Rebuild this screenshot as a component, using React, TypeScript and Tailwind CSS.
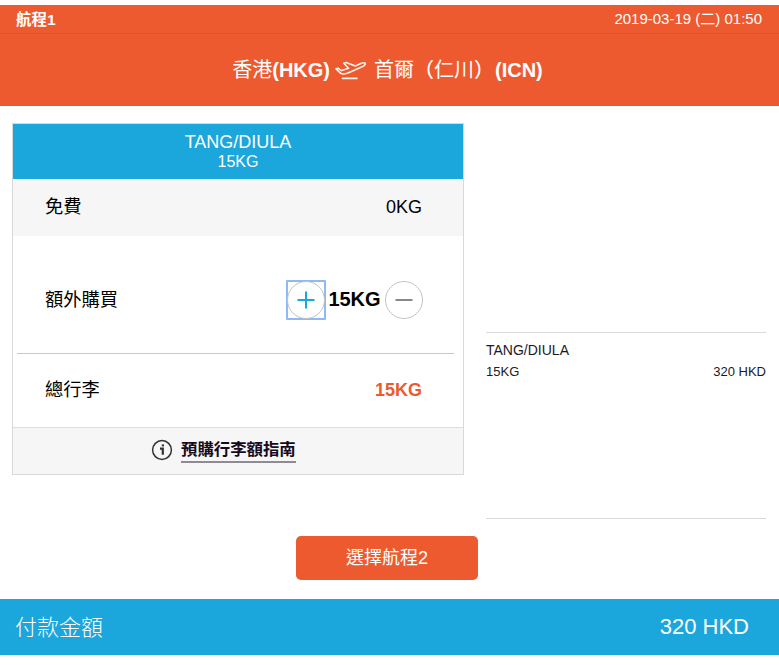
import React from "react";

const PlaneIcon: React.FC = () => (
  <svg
    width="32"
    height="20"
    viewBox="0 0 32 20"
    fill="none"
    stroke="#fff3ec"
    strokeWidth="1.6"
    strokeLinecap="round"
    strokeLinejoin="round"
  >
    <path d="M1 8.8 L3.2 8.3 L6.6 10.6 L13.6 8.2 L8.8 3.2 L11.2 2.4 L20.4 6 L26.4 3.3 C28.4 2.5 30 2.6 30.3 3.4 C30.3 4.8 28.4 6.2 26.6 7.1 L13 12.9 C9.8 14.2 7.6 14.4 5.8 13.4 L1 8.8 Z" />
    <path d="M7.5 18.4 H22" />
  </svg>
);

const InfoIcon: React.FC = () => (
  <svg width="22" height="22" viewBox="0 0 22 22" fill="none" stroke="#333333">
    <circle cx="11" cy="11" r="9.4" strokeWidth="1.5" />
    <path d="M9 9.6 H11.8 M11.8 8.6 V15.8" strokeWidth="2.2" />
    <path d="M10.8 6.4 H13" strokeWidth="2" />
  </svg>
);

const Header: React.FC = () => {
  return (
    <header className="h-[101px] bg-[#ee5a2f] text-white">
      <div className="flex h-[29px] items-center justify-between border-b border-[#e2532b] pt-px pr-[17px] pl-4 text-[15px]">
        <span className="text-[15.5px] font-bold">航程1</span>
        <span>2019-03-19 (二) 01:50</span>
      </div>
      <div className="flex h-[72px] items-center justify-center pr-1 text-[20px]">
        <span className="whitespace-nowrap">
          香港<b>(HKG)</b>
        </span>
        <span className="mr-[7px] ml-[5px]">
          <PlaneIcon />
        </span>
        <span className="whitespace-nowrap">
          首爾<span className="font-medium">（</span>仁川<span className="font-medium">）</span>
          <b className="ml-px">(ICN)</b>
        </span>
      </div>
    </header>
  );
};

const BaggageCard: React.FC = () => {
  return (
    <section className="h-[352px] w-[452px] border border-[#d9d9d9] text-lg text-black">
      <div className="flex h-[55px] flex-col items-center bg-[#1ba6dc] pt-2 text-white">
        <span className="text-[18px] leading-5">TANG/DIULA</span>
        <span className="text-base leading-[19px]">15KG</span>
      </div>
      <div className="flex h-[57px] items-center justify-between bg-[#f6f6f6] pr-[41px] pl-8">
        <span className="text-[18.3px]">免費</span>
        <span className="pb-0.5">0KG</span>
      </div>
      <div className="mr-[9px] ml-1 flex h-[118px] items-center justify-between border-b border-[#c9c9c9] pt-[11px] pr-[31px] pl-7">
        <span className="text-[18.3px]">額外購買</span>
        <div className="flex items-center">
          <button className="flex size-10 items-center justify-center rounded-[1px] border-2 border-[#8fb8f7]">
            <span className="flex size-[38px] shrink-0 items-center justify-center rounded-full border border-[#c4c4c4]">
              <svg width="18" height="18" viewBox="0 0 18 18" stroke="#1ba6dc" strokeWidth="2">
                <path d="M0.5 9 H17.5 M9 0.5 V17.5" />
              </svg>
            </span>
          </button>
          <span className="w-[59px] pr-0.5 text-center text-[20px] font-bold">15KG</span>
          <button className="flex size-[38px] items-center justify-center rounded-full border border-[#c4c4c4]">
            <svg width="18" height="18" viewBox="0 0 18 18" stroke="#888888" strokeWidth="2">
              <path d="M0.5 9 H17.5" />
            </svg>
          </button>
        </div>
      </div>
      <div className="flex h-[73px] items-center justify-between pr-[41px] pl-8">
        <span className="text-[18.3px]">總行李</span>
        <span className="pb-0.5 font-bold text-[#ee5a2f]">15KG</span>
      </div>
      <div className="flex h-[47px] items-center border-t border-[#dedede] bg-[#f6f6f6] pb-0.5 pl-[138px]">
        <InfoIcon />
        <a className="ml-2 h-[26px] border-b-2 border-[#8f8a93] text-[16.4px] leading-[25px] font-bold text-[#160a1c]">
          預購行李額指南
        </a>
      </div>
    </section>
  );
};

const Summary: React.FC = () => {
  return (
    <aside className="mt-[209px] ml-[22px] h-[187px] w-[280px] border-y border-[#d9d9d9] pt-[7px] text-[#1a1a24]">
      <p className="text-sm leading-5">TANG/DIULA</p>
      <div className="flex justify-between text-[13px] leading-6">
        <span>15KG</span>
        <span>320 HKD</span>
      </div>
    </aside>
  );
};

export default function App() {
  return (
    <div className="h-[665px] w-[779px] overflow-hidden bg-white pt-[5px] font-['Liberation_Sans','Noto_Sans_CJK_TC',sans-serif]">
      <Header />
      <main className="flex h-[430px] items-start pt-[17px] pl-3">
        <BaggageCard />
        <Summary />
      </main>
      <div className="flex h-[63px] pl-[296px]">
        <button className="h-11 w-[182px] rounded-[5px] bg-[#ee5a2f] text-[18px] text-white">
          選擇航程2
        </button>
      </div>
      <footer className="flex h-14 items-center justify-between bg-[#1ba6dc] pr-[30px] pl-[15px] text-[22px] text-white">
        <span className="font-light">付款金額</span>
        <span className="pb-0.5">320 HKD</span>
      </footer>
    </div>
  );
}
